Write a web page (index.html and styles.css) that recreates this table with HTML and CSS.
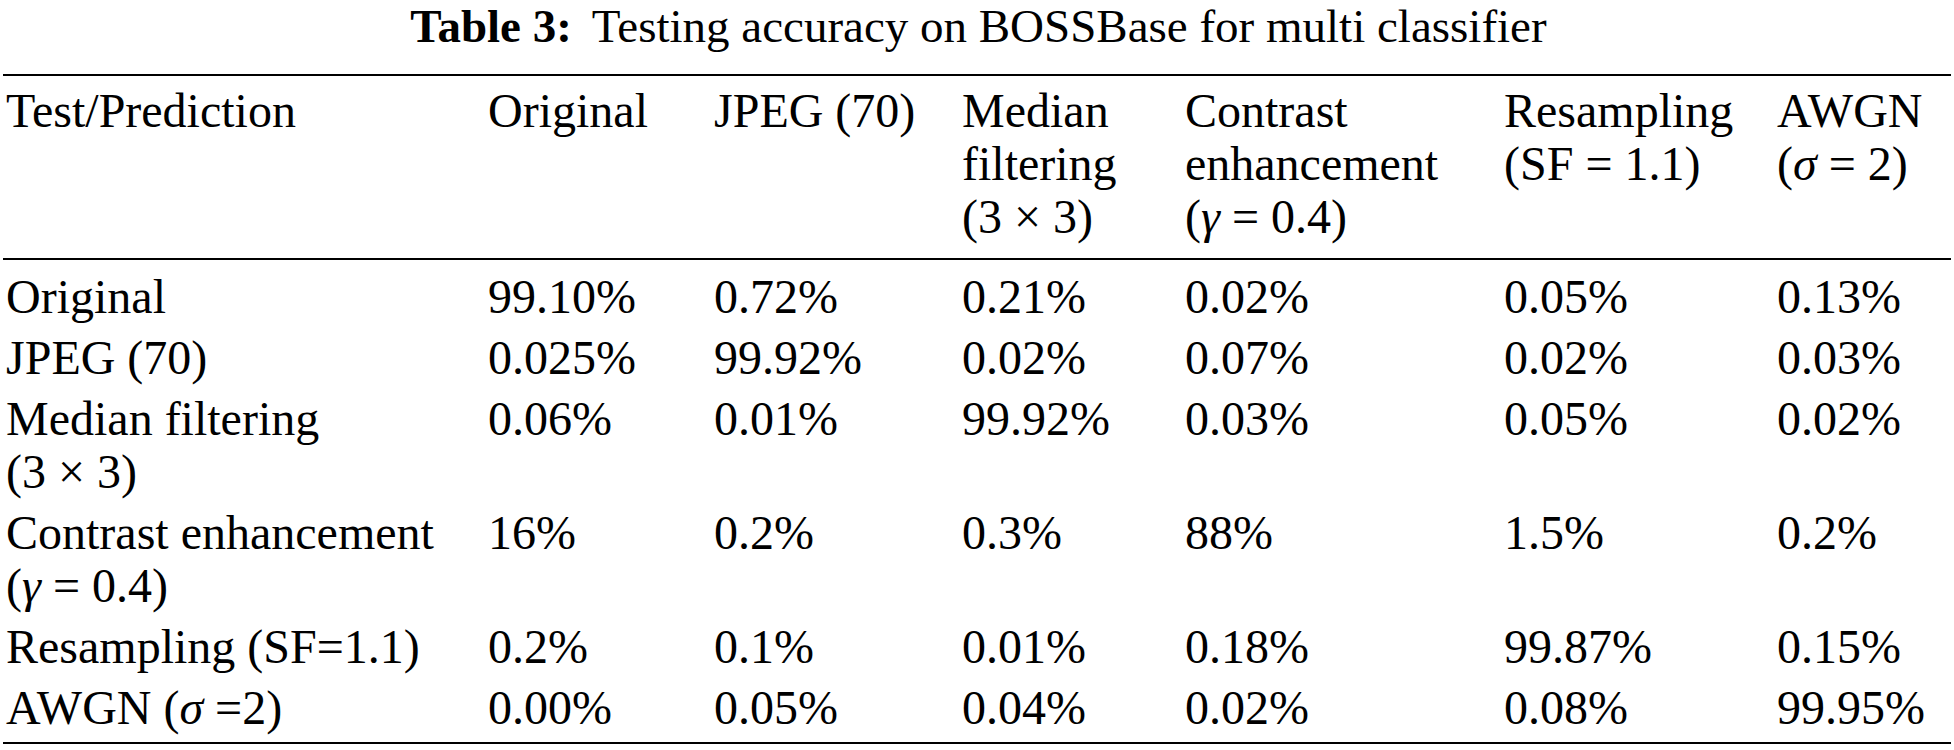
FILE: index.html
```html
<!DOCTYPE html>
<html>
<head>
<meta charset="utf-8">
<link rel="stylesheet" href="styles.css">
</head>
<body>
<div class="page">
  <div class="caption"><span class="label">Table 3:</span>Testing accuracy on BOSSBase for multi classifier</div>
  <table class="tbl">
    <colgroup>
      <col class="c1"><col class="c2"><col class="c3"><col class="c4"><col class="c5"><col class="c6"><col class="c7">
    </colgroup>
    <thead>
      <tr>
        <th>Test/Prediction</th>
        <th>Original</th>
        <th>JPEG (70)</th>
        <th>Median<br>filtering<br>(3 × 3)</th>
        <th>Contrast<br>enhancement<br>(<i>γ</i> = 0.4)</th>
        <th>Resampling<br>(SF = 1.1)</th>
        <th>AWGN<br>(<i>σ</i> = 2)</th>
      </tr>
    </thead>
    <tbody>
      <tr><td>Original</td><td>99.10%</td><td>0.72%</td><td>0.21%</td><td>0.02%</td><td>0.05%</td><td>0.13%</td></tr>
      <tr><td>JPEG (70)</td><td>0.025%</td><td>99.92%</td><td>0.02%</td><td>0.07%</td><td>0.02%</td><td>0.03%</td></tr>
      <tr><td>Median filtering<br>(3 × 3)</td><td>0.06%</td><td>0.01%</td><td>99.92%</td><td>0.03%</td><td>0.05%</td><td>0.02%</td></tr>
      <tr><td>Contrast enhancement<br>(<i>γ</i> = 0.4)</td><td>16%</td><td>0.2%</td><td>0.3%</td><td>88%</td><td>1.5%</td><td>0.2%</td></tr>
      <tr><td>Resampling (SF=1.1)</td><td>0.2%</td><td>0.1%</td><td>0.01%</td><td>0.18%</td><td>99.87%</td><td>0.15%</td></tr>
      <tr><td>AWGN (<i>σ</i> =2)</td><td>0.00%</td><td>0.05%</td><td>0.04%</td><td>0.02%</td><td>0.08%</td><td>99.95%</td></tr>
    </tbody>
  </table>
</div>
</body>
</html>
```
FILE: styles.css
```css
html, body {
  margin: 0;
  padding: 0;
  background: #ffffff;
}
body {
  font-family: "Liberation Serif", "Times New Roman", serif;
  color: #000000;
}
.page {
  width: 1954px;
  padding-left: 3px;
  box-sizing: border-box;
}
.caption {
  font-size: 47px;
  line-height: 53px;
  padding-top: 0;
  height: 65px;
  box-sizing: border-box;
  text-align: center;
  white-space: nowrap;
}
.label {
  font-weight: bold;
  margin-right: 20px;
}
.tbl {
  border-collapse: collapse;
  table-layout: fixed;
  width: 1948px;
  font-size: 48px;
  line-height: 53px;
  border-top: 2px solid #000;
  border-bottom: 2px solid #000;
  margin-top: 9px;
}
.c1 { width: 485px; }
.c2 { width: 226px; }
.c3 { width: 248px; }
.c4 { width: 223px; }
.c5 { width: 319px; }
.c6 { width: 273px; }
.c7 { width: 174px; }
.tbl th, .tbl td {
  text-align: left;
  vertical-align: top;
  font-weight: normal;
  padding: 8px 0 0 0;
  white-space: nowrap;
}
.tbl th:first-child, .tbl td:first-child {
  padding-left: 3px;
}
.tbl thead th {
  padding-top: 8px;
  padding-bottom: 15px;
  border-bottom: 2px solid #000;
}
.tbl tbody tr:first-child td {
  padding-top: 10px;
}
.tbl tbody tr:last-child td {
  padding-bottom: 8px;
}
```
